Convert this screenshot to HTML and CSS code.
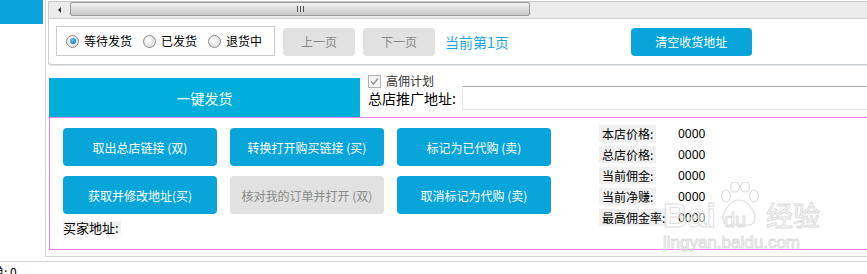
FILE: index.html
```html
<!DOCTYPE html>
<html lang="zh-CN">
<head>
    <meta charset="UTF-8">
    <meta name="viewport" content="width=device-width, initial-scale=1.0">
    <title>代购发货</title>
    <link rel="stylesheet" href="styles.css">
</head>
<body>
    <div class="app">
        <div class="side">
            <div class="side-tab"></div>
        </div>
        <div class="main">
            <div class="top-panel">
                <div class="hscroll">
                    <div class="hs-arrow"><span class="tri"></span></div>
                    <div class="hs-thumb"><span class="grip"></span></div>
                </div>
                <div class="controls">
                    <div class="radio-group">
                        <label class="radio-item"><span class="radio checked"></span>等待发货</label>
                        <label class="radio-item"><span class="radio"></span>已发货</label>
                        <label class="radio-item"><span class="radio"></span>退货中</label>
                    </div>
                    <button class="btn btn-gray btn-page">上一页</button>
                    <button class="btn btn-gray btn-page">下一页</button>
                    <span class="page-info">当前第1页</span>
                    <button class="btn btn-blue btn-clear">清空收货地址</button>
                </div>
            </div>

            <div class="ship-row">
                <div class="ship-btn">一键发货</div>
                <div class="ship-right">
                    <div class="check-row">
                        <span class="checkbox">
                            <svg width="9" height="9" viewBox="0 0 9 9"><path d="M1 4.5 L3.5 7 L8 1.5" fill="none" stroke="#9a9a9a" stroke-width="1.6"/></svg>
                        </span>
                        高佣计划
                    </div>
                    <div class="addr-row">
                        <span class="addr-label">总店推广地址:</span>
                        <input class="addr-input" type="text">
                    </div>
                </div>
            </div>

            <div class="work-box">
                <div class="work-left">
                    <div class="btn-grid">
                        <button class="btn btn-blue">取出总店链接 (双)</button>
                        <button class="btn btn-blue">转换打开购买链接 (买)</button>
                        <button class="btn btn-blue">标记为已代购 (卖)</button>
                        <button class="btn btn-blue">获取并修改地址(买)</button>
                        <button class="btn btn-gray">核对我的订单并打开 (双)</button>
                        <button class="btn btn-blue">取消标记为代购 (卖)</button>
                    </div>
                    <span class="buyer-label">买家地址:</span>
                </div>
                <div class="stats">
                    <span class="stat-label">本店价格:</span><span class="stat-value">0000</span>
                    <span class="stat-label">总店价格:</span><span class="stat-value">0000</span>
                    <span class="stat-label">当前佣金:</span><span class="stat-value">0000</span>
                    <span class="stat-label">当前净赚:</span><span class="stat-value">0000</span>
                    <span class="stat-label">最高佣金率:</span><span class="stat-value">0000</span>
                </div>
            </div>
        </div>
    </div>
    <div class="status">单: 0</div>

    <div class="watermark">
        <div class="wm-top">
            <span class="wm-bai">Bai</span>
            <span class="wm-paw">
                <svg width="42" height="46" viewBox="0 0 42 46">
                    <g fill="none" stroke="#d8d8d8" stroke-width="1.2">
                        <ellipse cx="8" cy="14" rx="4.5" ry="6"/>
                        <ellipse cx="17" cy="5" rx="4.5" ry="5"/>
                        <ellipse cx="27" cy="5" rx="4.5" ry="5"/>
                        <ellipse cx="36" cy="14" rx="4.5" ry="6"/>
                        <path d="M21 18 C30 18 40 32 36 40 C33 46 24 42 21 42 C18 42 9 46 6 40 C2 32 12 18 21 18 Z"/>
                    </g>
                </svg>
                <span class="wm-du">du</span>
            </span>
            <span class="wm-jy">经验</span>
        </div>
        <div class="wm-url">jingyan.baidu.com</div>
    </div>
</body>
</html>
```

FILE: styles.css
```css
html, body {
    margin: 0;
    padding: 0;
}
body {
    width: 867px;
    height: 274px;
    overflow: hidden;
    background: #fff;
    font-family: "Noto Sans CJK SC", "Liberation Sans", sans-serif;
    font-size: 12px;
    color: #000;
    position: relative;
}
.app {
    display: flex;
    height: 257px;
}
.side {
    width: 45px;
    flex: none;
}
.side-tab {
    width: 43px;
    height: 24px;
    background-color: #0aa3dc;
}
.main {
    flex: 1;
    min-width: 0;
    border-left: 1px solid #d4d4d4;
    border-bottom: 1px solid #d4d4d4;
    box-sizing: border-box;
}

/* top panel */
.top-panel {
    margin-left: 2px;
    border-left: 1px solid #cdcdcd;
    border-bottom: 1px solid #cdcdcd;
    border-bottom-left-radius: 3px;
    box-shadow: 0 1px 0 #dde4ea;
}
.hscroll {
    height: 15px;
    margin-top: 1px;
    border-top: 1px solid #c6c6c6;
    border-bottom: 1px solid #cfcfcf;
    background: #ececec;
    display: flex;
    align-items: flex-start;
    padding-bottom: 1px;
}
.hs-arrow {
    width: 21px;
    height: 15px;
    display: flex;
    align-items: center;
    justify-content: center;
}
.tri {
    width: 0;
    height: 0;
    border-top: 3px solid transparent;
    border-bottom: 3px solid transparent;
    border-right: 3px solid #333;
}
.hs-thumb {
    width: 458px;
    height: 12px;
    border: 1px solid #9d9d9d;
    border-radius: 2px;
    background: linear-gradient(#f4f4f4, #dcdcdc 50%, #c8c8c8);
    display: flex;
    align-items: center;
    justify-content: center;
}
.grip {
    width: 7px;
    height: 6px;
    background: repeating-linear-gradient(90deg, #555 0 1px, transparent 1px 3px);
}
.controls {
    height: 45px;
    display: flex;
    align-items: center;
    padding-left: 7px;
}
.radio-group {
    width: 219px;
    height: 30px;
    box-sizing: border-box;
    border: 1px solid #cccccc;
    display: flex;
    align-items: center;
    padding-left: 9px;
    margin-top: -1px;
}
.radio-item {
    display: flex;
    align-items: center;
    margin-right: 11px;
    line-height: 14px;
}
.radio {
    width: 11px;
    height: 11px;
    border: 1px solid #8d8d8d;
    border-radius: 50%;
    background: radial-gradient(circle at 40% 35%, #fff, #d4d4d4);
    margin-right: 5px;
    position: relative;
}
.radio.checked::after {
    content: "";
    position: absolute;
    left: 2.5px;
    top: 2.5px;
    width: 6px;
    height: 6px;
    border-radius: 50%;
    background: radial-gradient(circle at 40% 35%, #6cc4f5, #0b5ea8);
}
.btn {
    font-family: inherit;
    font-size: 12px;
    border: none;
    border-radius: 4px;
    padding: 0;
    cursor: pointer;
}
.btn-blue {
    background-color: #08a5db;
    color: #fff;
}
.btn-gray {
    background-color: #e1e1e1;
    color: #8a8a8a;
}
.btn-page {
    width: 72px;
    height: 28px;
    margin-left: 8px;
}
.page-info {
    margin-left: 10px;
    font-size: 14px;
    color: #17a8e3;
}
.btn-clear {
    width: 121px;
    height: 28px;
    margin-left: 122px;
}

/* ship row */
.ship-row {
    display: flex;
    height: 51px;
    margin-top: 1px;
}
.ship-btn {
    align-self: flex-end;
    width: 311px;
    height: 39px;
    margin-left: 3px;
    background-color: #00aedb;
    color: #fff;
    font-size: 14px;
    display: flex;
    align-items: center;
    justify-content: center;
}
.ship-right {
    flex: 1;
    margin-left: 8px;
}
.check-row {
    margin-top: 8px;
    height: 14px;
    line-height: 14px;
    display: flex;
    align-items: center;
    color: #333;
}
.checkbox {
    width: 11px;
    height: 11px;
    border: 1px solid #b3b3b3;
    background: #f3f3f3;
    margin-right: 5px;
    display: flex;
    align-items: center;
    justify-content: center;
}
.addr-row {
    margin-top: -2px;
    display: flex;
    align-items: center;
    height: 24px;
}
.addr-label {
    font-size: 14px;
    margin-right: 6px;
    white-space: nowrap;
}
.addr-input {
    flex: 1;
    height: 24px;
    box-sizing: border-box;
    border: 1px solid #e2e8ee;
    border-top-color: #a8a8a8;
    border-right: none;
    margin: 0;
    padding: 0;
}

/* work box */
.work-box {
    margin-left: 3px;
    margin-right: -20px;
    height: 133px;
    box-sizing: border-box;
    border: 1px solid #ee82ee;
    border-right: none;
    display: flex;
    padding: 10px 0 0 13px;
}
.btn-grid {
    display: grid;
    grid-template-columns: repeat(3, 154px);
    grid-auto-rows: 38px;
    column-gap: 13px;
    row-gap: 10px;
}
.buyer-label {
    display: inline-block;
    margin-top: 7px;
    font-size: 13px;
    line-height: 13px;
    background: #f2f2f2;
    padding-right: 2px;
}
.stats {
    margin-left: 48px;
    margin-top: -3px;
    display: grid;
    grid-template-columns: 79px auto;
    grid-auto-rows: 17px;
    row-gap: 4px;
    align-content: start;
}
.stat-label {
    justify-self: start;
    background: #f0f0f0;
    padding: 0 3px;
    line-height: 17px;
}
.stat-value {
    line-height: 17px;
    font-family: "Noto Sans", sans-serif;
    font-size: 12px;
}

/* status bar */
.status {
    margin-top: 4px;
    border-top: 1px solid #d4d4d4;
    padding-top: 3px;
    text-indent: -8px;
    line-height: 14px;
}

/* watermark */
.watermark {
    position: absolute;
    left: 663px;
    top: 178px;
    pointer-events: none;
    opacity: 0.8;
}
.wm-top {
    display: flex;
    align-items: flex-end;
    height: 54px;
}
.wm-bai, .wm-du, .wm-jy, .wm-url {
    color: rgba(255, 255, 255, 0.7);
    -webkit-text-stroke: 1px #d6d6d6;
    font-family: "Liberation Sans", sans-serif;
}
.wm-bai {
    font-size: 34px;
    line-height: 34px;
    font-weight: bold;
}
.wm-paw {
    position: relative;
    width: 44px;
    height: 50px;
    margin-left: 2px;
}
.wm-paw svg {
    position: absolute;
    left: 0;
    top: 0;
}
.wm-du {
    position: absolute;
    left: 6px;
    bottom: 2px;
    font-size: 20px;
    line-height: 20px;
}
.wm-jy {
    font-family: "Noto Sans CJK SC", sans-serif;
    font-size: 27px;
    line-height: 34px;
    margin-left: 4px;
}
.wm-url {
    font-size: 17px;
    line-height: 20px;
    margin-top: 1px;
}
```
